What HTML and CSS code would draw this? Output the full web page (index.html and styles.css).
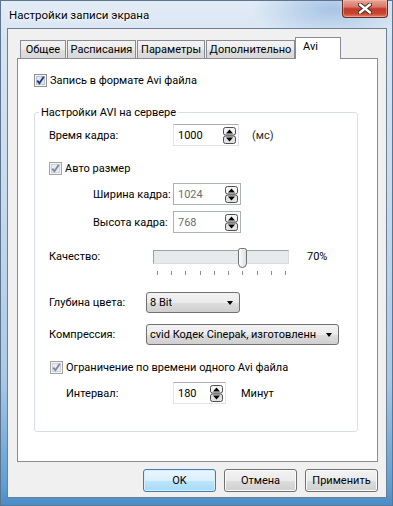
FILE: index.html
```html
<!DOCTYPE html>
<html lang="ru">
<head>
    <meta charset="UTF-8">
    <meta name="viewport" content="width=device-width, initial-scale=1.0">
    <title>Настройки записи экрана</title>
    <link rel="stylesheet" href="styles.css">
</head>
<body>
    <div class="window">
        <!-- заголовок окна -->
        <div class="titlebar">
            <span class="title">Настройки записи экрана</span>
            <div class="close-btn">
                <svg width="14" height="11" viewBox="0 0 14 11">
                    <path d="M2 1.5 L12 9.5 M12 1.5 L2 9.5" stroke="#3a2a28" stroke-width="4.2" stroke-linecap="round"/>
                    <path d="M2 1.5 L12 9.5 M12 1.5 L2 9.5" stroke="#ffffff" stroke-width="2.4" stroke-linecap="round"/>
                </svg>
            </div>
        </div>

        <div class="client">
            <!-- вкладки -->
            <div class="tabs">
                <div class="tab tab-general">Общее</div>
                <div class="tab tab-schedule">Расписания</div>
                <div class="tab tab-params">Параметры</div>
                <div class="tab tab-extra">Дополнительно</div>
                <div class="tab tab-avi active">Avi</div>
            </div>

            <div class="tab-panel">
                <div class="check-row">
                    <span class="checkbox">
                        <svg width="13" height="13" viewBox="0 0 13 13">
                            <rect x="0.5" y="0.5" width="12" height="12" fill="#f6f6f6" stroke="#8e8f8f"/>
                            <rect x="2.5" y="2.5" width="8" height="8" fill="#dfe6ee" stroke="#b9c3ce"/>
                            <path d="M3.2 6.6 L5.4 9.2 L9.8 2.8" fill="none" stroke="#21387a" stroke-width="1.9"/>
                        </svg>
                    </span>
                    Запись в формате Avi файла
                </div>

                <fieldset class="group">
                    <legend>Настройки AVI на сервере</legend>

                    <div class="row">
                        <span class="label label-main">Время кадра:</span>
                        <div class="spin-edit edit-time">
                            <span class="edit-value">1000</span>
                            <svg class="spinner" width="13" height="17" viewBox="0 0 13 17">
                                <rect x="0.5" y="0.5" width="12" height="7.5" rx="2" fill="#f3f3f3" stroke="#4d4d4d"/>
                                <rect x="0.5" y="9" width="12" height="7.5" rx="2" fill="#e2e2e2" stroke="#4d4d4d"/>
                                <path d="M3 6.5 L6.5 2.5 L10 6.5 Z" fill="#000"/>
                                <path d="M3 10.5 L10 10.5 L6.5 14.5 Z" fill="#000"/>
                            </svg>
                        </div>
                        <span class="unit unit-ms">(мс)</span>
                    </div>

                    <div class="check-row check-auto">
                        <span class="checkbox">
                            <svg width="13" height="13" viewBox="0 0 13 13">
                                <rect x="0.5" y="0.5" width="12" height="12" fill="#f4f4f4" stroke="#a3a3a3"/>
                                <rect x="2.5" y="2.5" width="8" height="8" fill="#e9ecef" stroke="#cfd3d8"/>
                                <path d="M3.2 6.6 L5.4 9.2 L9.8 2.8" fill="none" stroke="#7c8aa8" stroke-width="1.9"/>
                            </svg>
                        </span>
                        Авто размер
                    </div>

                    <div class="row row-size row-width">
                        <span class="label label-size">Ширина кадра:</span>
                        <div class="spin-edit edit-size disabled">
                            <span class="edit-value">1024</span>
                            <svg class="spinner" width="13" height="17" viewBox="0 0 13 17">
                                <rect x="0.5" y="0.5" width="12" height="7.5" rx="2" fill="#f3f3f3" stroke="#4d4d4d"/>
                                <rect x="0.5" y="9" width="12" height="7.5" rx="2" fill="#e2e2e2" stroke="#4d4d4d"/>
                                <path d="M3 6.5 L6.5 2.5 L10 6.5 Z" fill="#000"/>
                                <path d="M3 10.5 L10 10.5 L6.5 14.5 Z" fill="#000"/>
                            </svg>
                        </div>
                    </div>

                    <div class="row row-size row-height">
                        <span class="label label-size">Высота кадра:</span>
                        <div class="spin-edit edit-size disabled">
                            <span class="edit-value">768</span>
                            <svg class="spinner" width="13" height="17" viewBox="0 0 13 17">
                                <rect x="0.5" y="0.5" width="12" height="7.5" rx="2" fill="#f3f3f3" stroke="#4d4d4d"/>
                                <rect x="0.5" y="9" width="12" height="7.5" rx="2" fill="#e2e2e2" stroke="#4d4d4d"/>
                                <path d="M3 6.5 L6.5 2.5 L10 6.5 Z" fill="#000"/>
                                <path d="M3 10.5 L10 10.5 L6.5 14.5 Z" fill="#000"/>
                            </svg>
                        </div>
                    </div>

                    <div class="row row-quality">
                        <span class="label label-quality">Качество:</span>
                        <div class="slider">
                            <div class="slider-track"></div>
                            <svg class="slider-thumb" width="9" height="20" viewBox="0 0 9 20">
                                <defs>
                                    <linearGradient id="thumbFill" x1="0" y1="0" x2="1" y2="0">
                                        <stop offset="0" stop-color="#ffffff"/>
                                        <stop offset="1" stop-color="#dcdcdc"/>
                                    </linearGradient>
                                </defs>
                                <path d="M0.5 2.5 Q0.5 0.5 2.5 0.5 H6.5 Q8.5 0.5 8.5 2.5 V15.5 Q8.5 19.5 4.5 19.5 Q0.5 19.5 0.5 15.5 Z" fill="url(#thumbFill)" stroke="#707070"/>
                            </svg>
                            <div class="ticks">
                                <span></span><span></span><span></span><span></span><span></span>
                                <span></span><span></span><span></span><span></span><span></span>
                            </div>
                        </div>
                        <span class="slider-value">70%</span>
                    </div>

                    <div class="row row-depth">
                        <span class="label label-combo">Глубина цвета:</span>
                        <div class="combo combo-depth">
                            <span class="combo-text">8 Bit</span>
                            <span class="combo-arrow"></span>
                        </div>
                    </div>

                    <div class="row row-codec">
                        <span class="label label-combo">Компрессия:</span>
                        <div class="combo combo-codec">
                            <span class="combo-text">cvid Кодек Cinepak, изготовленн</span>
                            <span class="combo-arrow"></span>
                        </div>
                    </div>

                    <div class="check-row check-limit">
                        <span class="checkbox">
                            <svg width="13" height="13" viewBox="0 0 13 13">
                                <rect x="0.5" y="0.5" width="12" height="12" fill="#f4f4f4" stroke="#a3a3a3"/>
                                <rect x="2.5" y="2.5" width="8" height="8" fill="#e9ecef" stroke="#cfd3d8"/>
                                <path d="M3.2 6.6 L5.4 9.2 L9.8 2.8" fill="none" stroke="#7c8aa8" stroke-width="1.9"/>
                            </svg>
                        </span>
                        Ограничение по времени одного Avi файла
                    </div>

                    <div class="row row-interval">
                        <span class="label label-interval">Интервал:</span>
                        <div class="spin-edit edit-interval">
                            <span class="edit-value">180</span>
                            <svg class="spinner" width="13" height="17" viewBox="0 0 13 17">
                                <rect x="0.5" y="0.5" width="12" height="7.5" rx="2" fill="#f3f3f3" stroke="#4d4d4d"/>
                                <rect x="0.5" y="9" width="12" height="7.5" rx="2" fill="#e2e2e2" stroke="#4d4d4d"/>
                                <path d="M3 6.5 L6.5 2.5 L10 6.5 Z" fill="#000"/>
                                <path d="M3 10.5 L10 10.5 L6.5 14.5 Z" fill="#000"/>
                            </svg>
                        </div>
                        <span class="unit unit-min">Минут</span>
                    </div>
                </fieldset>
            </div>

            <!-- кнопки диалога -->
            <div class="buttons">
                <button class="btn btn-default">OK</button>
                <button class="btn">Отмена</button>
                <button class="btn">Применить</button>
            </div>
        </div>
    </div>
</body>
</html>
```

FILE: styles.css
```css
* {
    margin: 0;
    padding: 0;
    box-sizing: border-box;
}

body {
    font-family: Roboto, 'Noto Sans', sans-serif;
    font-size: 11px;
    line-height: 15px;
    color: #000;
    width: 393px;
    height: 506px;
    overflow: hidden;
    white-space: nowrap;
}

/* рамка окна */
.window {
    width: 393px;
    height: 506px;
    background:
        radial-gradient(ellipse 80px 30px at 330px 8px, rgba(120, 165, 215, 0.55), transparent),
        linear-gradient(180deg, #e2ecf7 0%, #d6e4f2 8%, #c7d9ec 40%, #aac8e6 75%, #5d9fd6 96%, #4a8cc6 100%);
    border: 1px solid #5e7590;
    display: flex;
    flex-direction: column;
}

.titlebar {
    height: 27px;
    display: flex;
    justify-content: space-between;
    align-items: center;
    padding-left: 8px;
}

.title {
    font-size: 11.5px;
    color: #000;
    text-shadow: 0 0 6px #fff, 0 0 3px #fff;
    margin-top: 2px;
}

.close-btn {
    align-self: flex-start;
    width: 46px;
    height: 18px;
    margin-right: 4px;
    margin-top: -1px;
    border: 1px solid #6b2a22;
    border-top: none;
    border-radius: 0 0 4px 4px;
    background: linear-gradient(180deg, #e7a596 0%, #d9786a 40%, #c23a28 52%, #c9452f 80%, #e0826a 100%);
    box-shadow: inset 0 0 0 1px rgba(255, 200, 190, 0.45);
    display: flex;
    align-items: center;
    justify-content: center;
}

/* клиентская область */
.client {
    width: 380px;
    height: 470px;
    margin-left: 6px;
    background-color: #f0f0f0;
    border: 1px solid #6d7f93;
}

/* вкладки */
.tabs {
    height: 29px;
    padding-top: 8px;
    padding-left: 12px;
    display: flex;
    align-items: flex-end;
}

.tab {
    height: 18px;
    border: 1px solid #898c95;
    border-bottom: none;
    background: linear-gradient(180deg, #f3f3f3 0%, #ebebeb 50%, #dedede 51%, #d9d9d9 100%);
    text-align: center;
    line-height: 18px;
    margin-right: 1px;
    color: #000;
}

.tab-general { width: 46px; }
.tab-schedule { width: 69px; }
.tab-params { width: 68px; }
.tab-extra { width: 89px; margin-right: 0; }

.tab.active {
    width: 46px;
    height: 22px;
    margin-bottom: -1px;
    background: #fff;
    text-align: left;
    padding-left: 7px;
    line-height: 17px;
    position: relative;
    z-index: 1;
}

.tab-panel {
    width: 361px;
    height: 404px;
    margin-left: 9px;
    background-color: #fff;
    border: 1px solid #898c95;
    padding: 14px 0 0 16px;
}

/* флажки */
.check-row {
    display: flex;
    align-items: center;
    height: 15px;
    gap: 3px;
}

.checkbox {
    width: 13px;
    height: 13px;
    display: flex;
}

.check-auto {
    margin-top: 15px;
}

.check-limit {
    margin-top: 15px;
    margin-left: 1px;
}

/* группа */
.group {
    width: 324px;
    margin-top: 17px;
    border: 1px solid #d5dfe5;
    border-radius: 3px;
    padding: 4px 0 27px 14px;
    min-width: 0;
}

.group legend {
    margin-left: -10px;
    padding: 0 2px;
    line-height: 15px;
}

.row {
    display: flex;
    align-items: center;
    height: 22px;
}

.label-main { width: 124px; }
.label-size { width: 80px; }
.label-combo { width: 97px; }
.label-quality { width: 104px; }
.label-interval { width: 107px; }

.row-size { padding-left: 44px; }
.row-width { margin-top: 7px; }
.row-height { margin-top: 6px; }

/* поле со счётчиком */
.spin-edit {
    height: 22px;
    display: flex;
    align-items: center;
    justify-content: space-between;
    padding: 0 2px 0 4px;
    background: #fff;
    border: 1px solid #e2e3ea;
    border-top-color: #abadb3;
}

.spin-edit.disabled {
    border-color: #adb2b5;
    color: #6d6d6d;
}

.spinner {
    display: block;
}

.edit-time { width: 66px; }
.edit-size { width: 68px; }
.edit-interval { width: 53px; }

.unit-ms { margin-left: 13px; color: #2b2b2b; }
.unit-min { margin-left: 15px; }

/* ползунок качества */
.row-quality {
    margin-top: 15px;
    height: 27px;
    align-items: flex-start;
}

.row-quality .label {
    margin-top: 1px;
}

.slider {
    width: 136px;
    height: 27px;
    position: relative;
}

.slider-track {
    height: 14px;
    margin-top: 2px;
    background: #e7eaea;
    border: 1px solid #dcdcdc;
    border-top-color: #a0a0a0;
    border-left-color: #a0a0a0;
}

.slider-thumb {
    position: absolute;
    left: 85px;
    top: 0;
}

.ticks {
    display: flex;
    justify-content: space-between;
    padding: 0 3px 0 4px;
    margin-top: 7px;
}

.ticks span {
    width: 1px;
    height: 4px;
    background: #8c8c8c;
}

.slider-value {
    margin-left: 18px;
    margin-top: 1px;
}

/* выпадающие списки */
.row-depth {
    margin-top: 17px;
    height: 21px;
}

.row-codec {
    margin-top: 11px;
    height: 21px;
}

.combo {
    height: 21px;
    display: flex;
    align-items: center;
    justify-content: space-between;
    padding: 0 6px 0 3px;
    border: 1px solid #707070;
    border-radius: 3px;
    background: linear-gradient(180deg, #f2f2f2 0%, #ebebeb 50%, #dddddd 51%, #cfcfcf 100%);
    overflow: hidden;
}

.combo-depth { width: 94px; }
.combo-codec { width: 193px; }

.combo-text {
    overflow: hidden;
}

.combo-arrow {
    flex-shrink: 0;
    margin-left: 4px;
    width: 0;
    height: 0;
    border-left: 3.5px solid transparent;
    border-right: 3.5px solid transparent;
    border-top: 4px solid #000;
}

.row-interval {
    margin-top: 7px;
    padding-left: 17px;
}

/* кнопки */
.buttons {
    width: 361px;
    margin: 7px 0 0 9px;
    display: flex;
    justify-content: flex-end;
    gap: 8px;
}

.btn {
    width: 73px;
    height: 23px;
    font-family: inherit;
    font-size: 11px;
    color: #000;
    border: 1px solid #707070;
    border-radius: 3px;
    background: linear-gradient(180deg, #f2f2f2 0%, #ebebeb 50%, #dddddd 51%, #cfcfcf 100%);
    box-shadow: inset 0 0 0 1px #fcfcfc;
}

.btn-default {
    border-color: #3c7fb1;
    background: linear-gradient(180deg, #eaf6fd 0%, #d9f0fc 50%, #bee6fd 51%, #a7d9f5 100%);
    box-shadow: inset 0 0 0 1px #d5eefa;
}
```
